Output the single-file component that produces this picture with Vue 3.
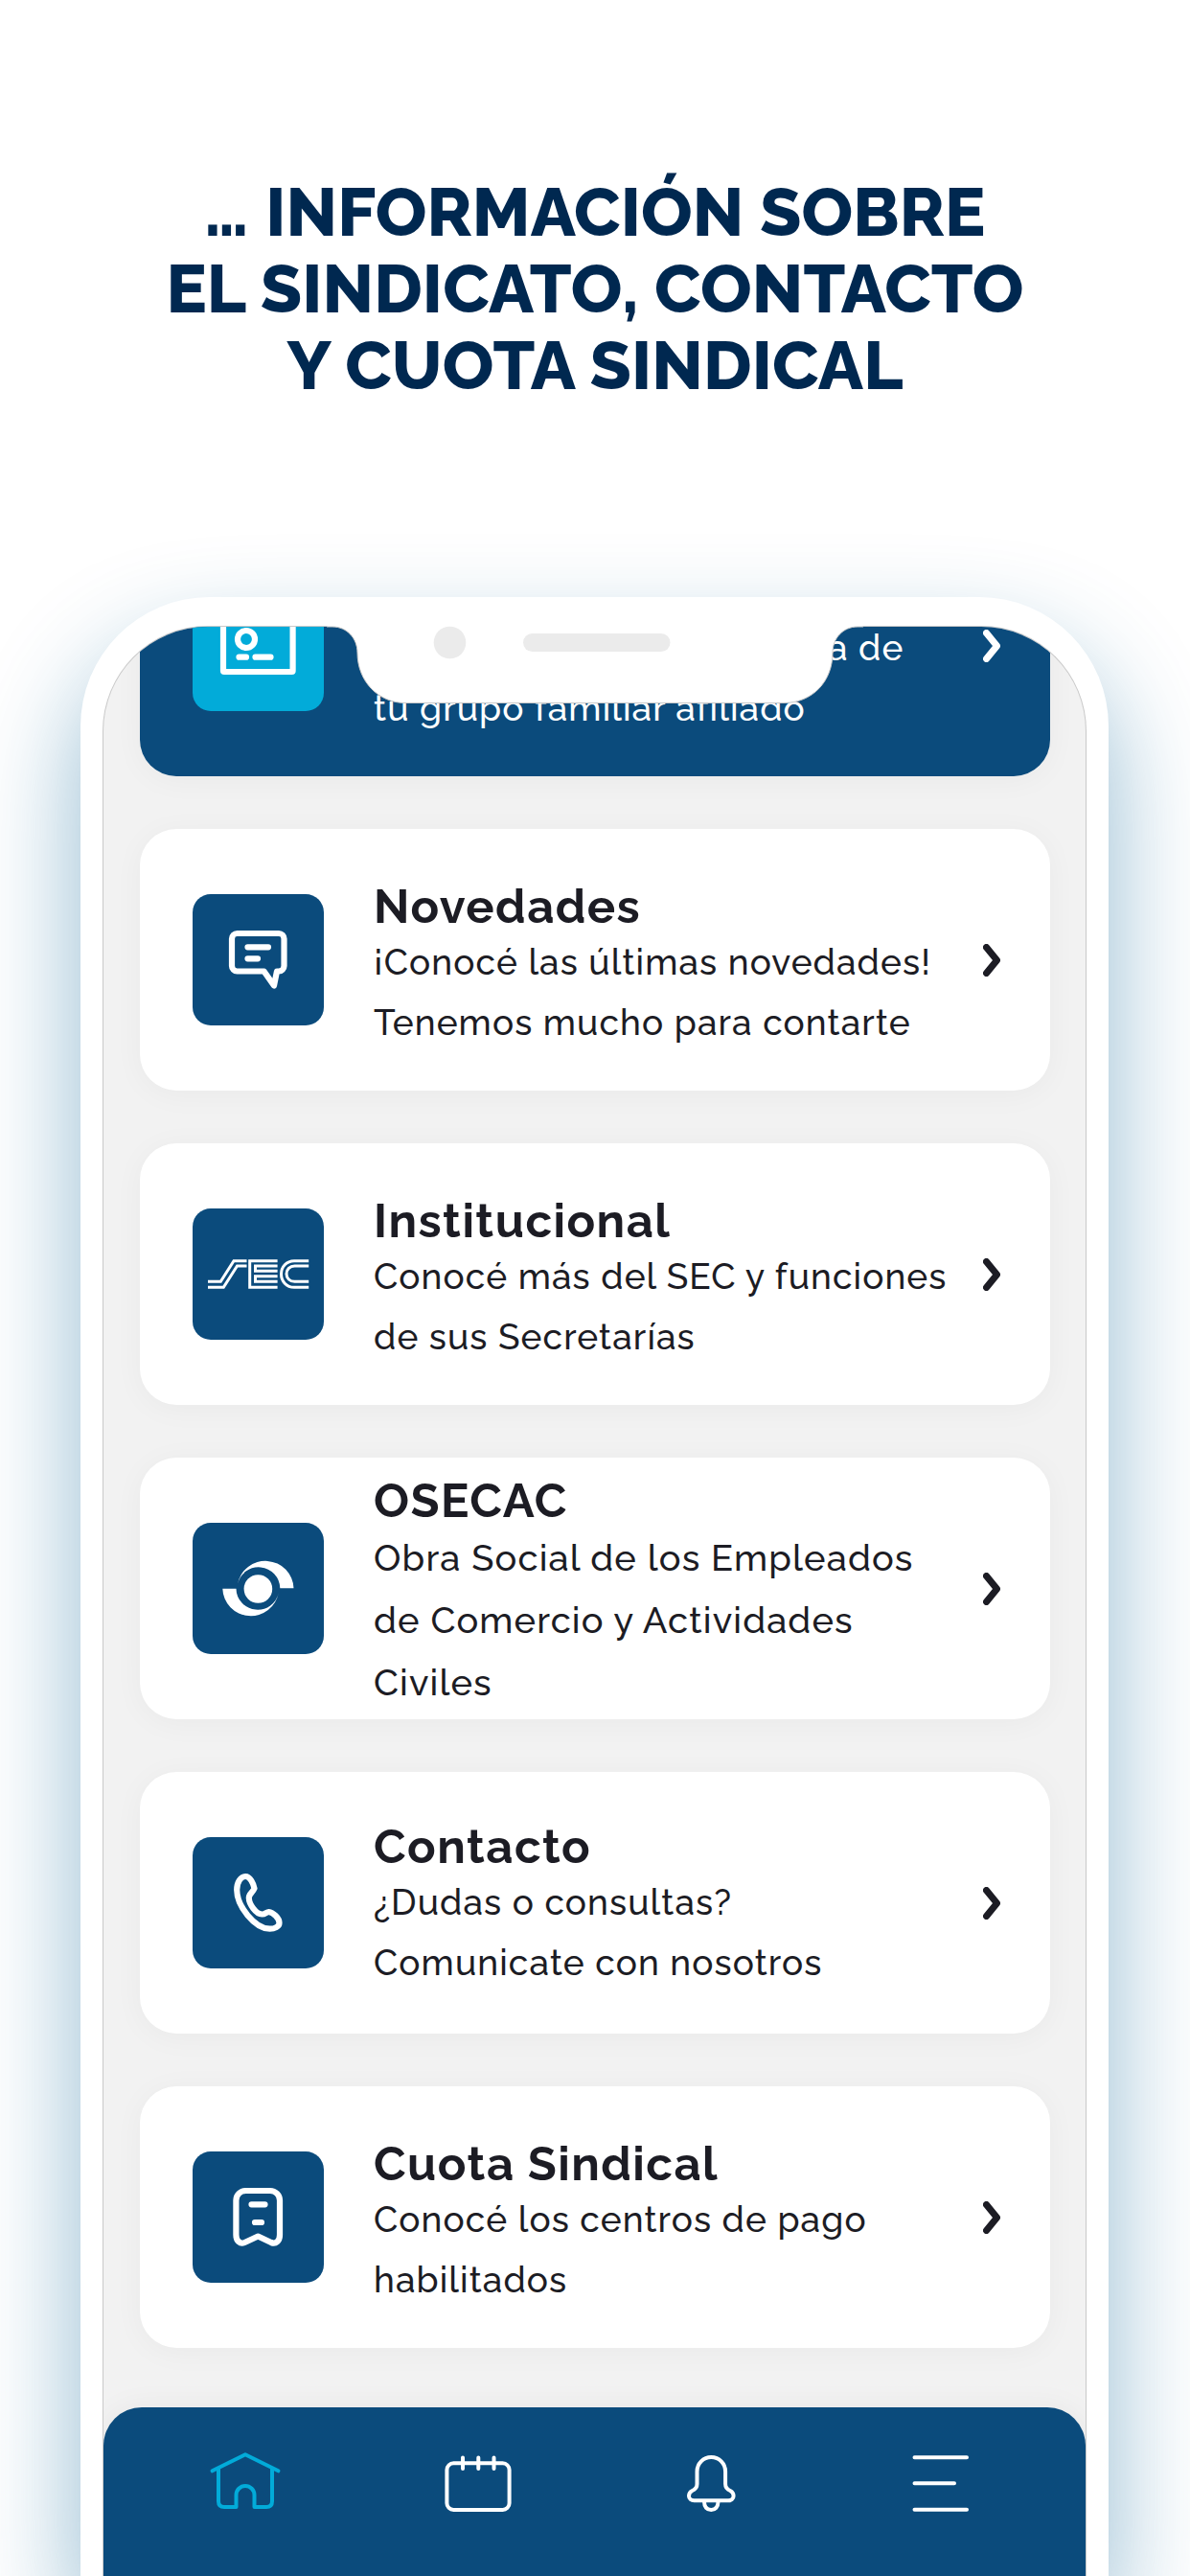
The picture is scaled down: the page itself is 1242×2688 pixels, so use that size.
<template>
  <div class="promo">
    <h1 class="headline">
      <span><span class="dots">...</span> INFORMACIÓN SOBRE</span>
      <span>EL SINDICATO, CONTACTO</span>
      <span>Y CUOTA SINDICAL</span>
    </h1>

    <div class="phone">
      <div class="screen">
        <div class="list">
          <article
            v-for="item in items"
            :key="item.id"
            class="card"
            :class="`card-${item.id}`"
          >
            <div class="tile">
              <!-- carnet -->
              <svg v-if="item.id === 'carnet'" class="glyph" viewBox="0 0 137 137">
                <rect x="32" y="38" width="72.6" height="58" rx="1" />
                <circle cx="56" cy="62" r="9" />
                <path d="M48.5 80.7H56M65.5 80.7h16" />
              </svg>
              <!-- novedades -->
              <svg v-else-if="item.id === 'novedades'" class="glyph" viewBox="0 0 137 137">
                <path
                  d="M46.5 41H90a5.5 5.5 0 0 1 5.5 5.5V75a5.5 5.5 0 0 1-5.5 5.5h-2L85 95.5 74.5 80.5h-28A5.5 5.5 0 0 1 41 75V46.5A5.5 5.5 0 0 1 46.5 41Z"
                />
                <path d="M57.5 55.3H79M57.5 67.3H68" />
              </svg>
              <!-- institucional -->
              <svg v-else-if="item.id === 'institucional'" class="glyph logo-sec" viewBox="0 0 137 137">
                <path d="M56.5 54.7H43L29.3 76.3H16M56.5 60H46.5L32.3 82.3H16" />
                <path d="M88.6 54.7H59.7V82.3H88.6" />
                <path d="M88.6 60H65.5V65.3H88.6M88.6 70.7H65.5V76.3H88.6" />
                <path d="M121.2 54.7H106C98 54.7 92.5 61 92.5 68.5S98 82.3 106 82.3H121.2" />
                <path d="M121.2 60H106.5C101.5 60 98 63.5 98 68.2S101.5 76.3 106.5 76.3H121.2" />
              </svg>
              <!-- osecac -->
              <svg v-else-if="item.id === 'osecac'" class="glyph logo-osecac" viewBox="0 0 137 137">
                <circle cx="68.4" cy="69" r="14.8" />
                <path d="M105.5 68.3A29.5 29.5 0 0 0 47 64A22.4 22.4 0 0 1 91.3 68.3Z" />
                <path
                  d="M105.5 68.3A29.5 29.5 0 0 0 47 64A22.4 22.4 0 0 1 91.3 68.3Z"
                  transform="rotate(180 68.4 68.5)"
                />
              </svg>
              <!-- contacto -->
              <svg v-else-if="item.id === 'contacto'" class="glyph" viewBox="0 0 137 137">
                <path
                  d="M55.3 41C60 41 63.5 48.5 64.5 53.5C63 57.5 58.8 59 58.8 63.5C59 70 66 80.3 72.5 80.5C76 80.5 77 78 79.5 78C84 78.5 90.5 84.5 90.5 89.5C90.5 93.5 85.5 95.7 80.6 95.7C65 95.7 46.2 72 46.2 55C46.2 47.5 50 41 55.3 41Z"
                />
              </svg>
              <!-- cuota -->
              <svg v-else class="glyph" viewBox="0 0 137 137">
                <path
                  d="M55.4 41H81a10 10 0 0 1 10 10V87C91 93.5 87 97 82 95L68.3 88.5L54.4 95C49.5 97 45.4 93.5 45.4 87V51a10 10 0 0 1 10-10Z"
                />
                <path d="M61.5 55.3H75.5M65 74H72" />
              </svg>
            </div>

            <div class="card-text">
              <h2>{{ item.title }}</h2>
              <p v-for="line in item.lines" :key="line">{{ line }}</p>
            </div>

            <svg class="chevron" viewBox="0 0 18 34">
              <path d="M3.5 3.5L14.5 17L3.5 30.5" />
            </svg>
          </article>
        </div>

        <nav class="tabbar">
          <a class="tab active">
            <svg viewBox="0 0 80 70">
              <path d="M5.6 22.3L40 5.3L74.4 22.3" />
              <path d="M12 20V54q0 6 6 6H30.5V47.5a9.5 9.5 0 0 1 19 0V60H62q6 0 6-6V20" />
            </svg>
          </a>
          <a class="tab">
            <svg viewBox="0 0 80 70">
              <rect x="7.4" y="14.3" width="65.2" height="48.7" rx="7" />
              <path d="M24 8.5V20M40.3 8.5V20M56.5 8.5V20" />
            </svg>
          </a>
          <a class="tab">
            <svg viewBox="0 0 80 70">
              <path
                d="M40.3 8C32 8 25.5 14.5 25.5 23V36C25.5 40.5 23 42 20.5 43C18.5 44 17 46 17 48.5C17 51.5 19.5 53.3 22.5 53.3H58.1C61.1 53.3 63.6 51.5 63.6 48.5C63.6 46 62.1 44 60.1 43C57.6 42 55.1 40.5 55.1 36V23C55.1 14.5 48.6 8 40.3 8Z"
              />
              <path d="M33 54.5C33 60 36 63 40.2 63S47.5 60 47.5 54.5" />
            </svg>
          </a>
          <a class="tab">
            <svg viewBox="0 0 80 70">
              <path d="M9.5 8.3H64M9.5 35.3H51M9.5 62.8H64" />
            </svg>
          </a>
        </nav>
      </div>

      <!-- muesca del teléfono -->
      <svg class="notch" viewBox="0 0 560 84">
        <path
          class="notch-shape"
          d="M0 -2V1H6C21 1 32 13 32 28C32 58 54 80.5 82 80.5H477C507 80.5 528 58 528 28C528 13 539 1 554 1H560V-2Z"
        />
        <circle cx="128.5" cy="17.5" r="16.8" />
        <rect x="205" y="8" width="153.5" height="19" rx="9.5" />
      </svg>
    </div>
  </div>
</template>

<script setup>
const items = [
  { id: 'carnet', title: '', lines: ['a de', 'tu grupo familiar afiliado'] },
  {
    id: 'novedades',
    title: 'Novedades',
    lines: ['¡Conocé las últimas novedades!', 'Tenemos mucho para contarte'],
  },
  {
    id: 'institucional',
    title: 'Institucional',
    lines: ['Conocé más del SEC y funciones', 'de sus Secretarías'],
  },
  {
    id: 'osecac',
    title: 'OSECAC',
    lines: ['Obra Social de los Empleados', 'de Comercio y Actividades', 'Civiles'],
  },
  {
    id: 'contacto',
    title: 'Contacto',
    lines: ['¿Dudas o consultas?', 'Comunicate con nosotros'],
  },
  {
    id: 'cuota',
    title: 'Cuota Sindical',
    lines: ['Conocé los centros de pago', 'habilitados'],
  },
]
</script>

<style>
body {
  margin: 0;
  background: #fff;
}
</style>

<style scoped>
.promo {
  display: flex;
  flex-direction: column;
  width: 1242px;
  height: 2688px;
  overflow: hidden;
  background: #fff;
  font-family: Raleway, Lato, 'Open Sans', sans-serif;
}

.headline {
  display: flex;
  flex-direction: column;
  align-items: center;
  box-sizing: border-box;
  height: 623px;
  margin: 0;
  padding-top: 182px;
  font-size: 70.6px;
  font-weight: 800;
  line-height: 80px;
  letter-spacing: 0.1px;
  color: #002850;
  white-space: nowrap;
}

.dots {
  letter-spacing: -2.5px;
  margin-right: 4px;
}

.phone {
  position: relative;
  box-sizing: border-box;
  display: flex;
  flex: 1;
  margin: 0 85px 0 84px;
  padding: 30px 23px 0;
  background: #fff;
  border-radius: 135px 135px 0 0;
  box-shadow: 0 55px 110px rgba(11, 100, 150, 0.45);
}

.screen {
  box-sizing: border-box;
  display: flex;
  flex: 1;
  flex-direction: column;
  border: 1px solid #c9c9c9;
  border-bottom: 0;
  border-radius: 110px 110px 0 0;
  background: #f2f2f2;
  overflow: hidden;
}

/* lista desplazada: la primera tarjeta queda cortada arriba */
.list {
  display: flex;
  flex-direction: column;
  gap: 55px;
  margin: -117px 37px 0 38px;
}

.card {
  box-sizing: border-box;
  display: flex;
  align-items: center;
  height: 273px;
  padding: 0 52px 0 55px;
  border-radius: 38px;
  background: #fff;
  color: #1c1c24;
  box-shadow: 0 4px 32px rgba(0, 0, 0, 0.04);
}

.tile {
  flex: none;
  width: 137px;
  height: 137px;
  border-radius: 19px;
  background: #0b4b7c;
}

.glyph {
  display: block;
  fill: none;
  stroke: #fff;
  stroke-width: 6.2;
  stroke-linecap: round;
  stroke-linejoin: round;
}

.logo-sec {
  stroke-width: 3;
  stroke-linecap: butt;
  stroke-linejoin: miter;
}

.logo-osecac {
  fill: #fff;
  stroke: none;
}

.card-text {
  flex: 1;
  margin-left: 52px;
  padding-top: 14px;
  white-space: nowrap;
}

.card-text h2 {
  height: 54px;
  margin: 0;
  font-size: 49px;
  font-weight: 700;
  line-height: 54px;
  letter-spacing: 0.03em;
}

.card-text p {
  margin: 0;
  font-size: 37px;
  font-weight: 500;
  line-height: 63px;
  letter-spacing: 0.03em;
}

.chevron {
  flex: none;
  width: 18px;
  height: 34px;
  fill: none;
  stroke: currentColor;
  stroke-width: 7;
  stroke-linecap: round;
  stroke-linejoin: round;
}

.card-carnet {
  background: #0b4b7c;
  color: #fff;
}

.card-carnet .tile {
  background: #02abd9;
}

.card-carnet p:first-of-type {
  padding-left: 474px;
}

.card-osecac .card-text {
  padding-top: 12px;
}

.card-osecac .card-text p {
  font-size: 38px;
  line-height: 65px;
}

.card-contacto .card-text {
  padding-top: 8px;
}

.tabbar {
  display: grid;
  grid-template-columns: repeat(4, 243px);
  box-sizing: border-box;
  height: 176px;
  margin-top: auto;
  padding: 44px 26px 0;
  border-radius: 40px 40px 0 0;
  background: #0b4b7c;
  box-shadow: 0 0 32px rgba(0, 0, 0, 0.05);
}

.tab {
  display: flex;
  justify-content: center;
  color: #fff;
}

.tab.active {
  color: #02abd9;
}

.tab svg {
  width: 80px;
  height: 70px;
  fill: none;
  stroke: currentColor;
  stroke-width: 4;
  stroke-linecap: round;
  stroke-linejoin: round;
}

.notch {
  position: absolute;
  top: 30px;
  left: 257px;
  width: 560px;
  height: 84px;
  fill: #ebebeb;
}

.notch-shape {
  fill: #fff;
  stroke: #c9c9c9;
  stroke-width: 1;
}
</style>
